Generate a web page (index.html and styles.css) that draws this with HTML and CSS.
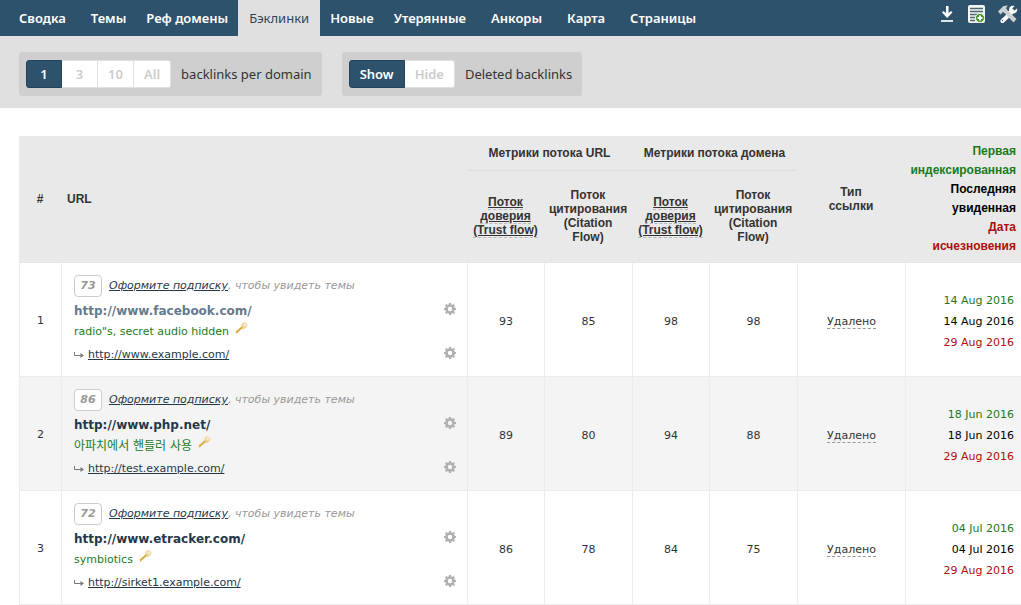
FILE: index.html
```html
<!DOCTYPE html>
<html lang="ru">
<head>
<meta charset="utf-8">
<title>Бэклинки</title>
<link rel="stylesheet" href="styles.css">
</head>
<body>
<svg class="sprite" aria-hidden="true">
  <symbol id="gear" viewBox="0 0 12 12">
    <path fill-rule="evenodd" d="M5 0h2l.3 1.500 1 .4L9.600 1 11 2.400l-.9 1.300.4 1L12 5v2l-1.500.3-.4 1 .9 1.300L9.600 11l-1.300-.9-1 .4L7 12H5l-.3-1.500-1-.4-1.300.9L1 9.600l.9-1.300-.4-1L0 7V5l1.500-.3.4-1L1 2.400 2.400 1l1.300.9 1-.4zM6 3.800a2.200 2.200 0 1 0 0 4.400 2.200 2.200 0 0 0 0-4.400z"/>
  </symbol>
  <symbol id="key" viewBox="0 0 13 12">
    <path d="M1 10.500 7.500 5" stroke="#d9a93a" stroke-width="2" fill="none"/>
    <path d="M1 11.500l2-1.500M2.500 8.500l1 1" stroke="#e6c264" stroke-width="1" fill="none"/>
    <circle cx="9.300" cy="3.300" r="3" fill="#efd9a0"/>
    <circle cx="9.800" cy="2.700" r="1.400" fill="#f8eccb"/>
    <path d="M6.700 4.500c.4 1.300 1.500 2 3 1.700" stroke="#e0b65a" fill="none"/>
  </symbol>
  <symbol id="arrow" viewBox="0 0 10 8">
    <path d="M.5 1v3.500H7" stroke="#777" fill="none"/>
    <path d="M6.500 2 10 4.500 6.500 7z" fill="#777"/>
  </symbol>
</svg>

<header class="topbar">
  <nav class="tabs">
    <a class="tab wide" href="#">Сводка</a>
    <a class="tab" href="#">Темы</a>
    <a class="tab" href="#">Реф домены</a>
    <a class="tab active" href="#" aria-current="page">Бэклинки</a>
    <a class="tab" href="#">Новые</a>
    <a class="tab wide" href="#">Утерянные</a>
    <a class="tab wide" href="#">Анкоры</a>
    <a class="tab wide" href="#">Карта</a>
    <a class="tab" href="#">Страницы</a>
  </nav>
  <div class="tools">
    <button class="tool" type="button" aria-label="Скачать">
      <svg width="12" height="18" viewBox="0 0 12 18"><path d="M5 1h2.500v7L10 6l1.500 1.500L6.200 13 1 7.500 2.500 6 5 8z" fill="#fff"/><path d="M0 15h12v2H0z" fill="#dfe6ea"/></svg>
    </button>
    <button class="tool" type="button" aria-label="Создать отчет">
      <svg width="18" height="18" viewBox="0 0 18 18"><rect width="17" height="18" rx="2" fill="#f4f6f3"/><path d="M2 3.500h13M2 6.500h13M2 9.500h8M2 12.500h5M2 15.500h5" stroke="#4b6572" stroke-width="1.500"/><circle cx="12" cy="13" r="4.500" fill="#3f9120" stroke="#edf3e7" /><path d="M12 10.500v5M9.500 13h5" stroke="#fff" stroke-width="2"/></svg>
    </button>
    <button class="tool" type="button" aria-label="Инструменты">
      <svg width="20" height="18" viewBox="0 0 20 18"><path d="M4.500 16 14 7" stroke="#fff" stroke-width="4" stroke-linecap="round"/><path d="M19 3.500 16.500 5.500l-2.300-2L16.500 1c-3-1-6 1.200-5.200 4.300L10 7l2.500 2.500 2-1.200c3.200.5 5.500-2 4.500-4.800z" fill="#fff"/><path d="M0 6.500 5.500 1 10 .5 8 3l1.200 2L18.500 14l-3 3.500L6.500 8 5 7 2.500 9.500z" fill="#ccd0d2"/><circle cx="4.500" cy="15.500" r=".7" fill="#2e526c"/></svg>
    </button>
  </div>
</header>

<section class="filters">
  <div class="filter" role="group" aria-labelledby="per-domain">
    <div class="switch">
      <button class="option selected" type="button" aria-pressed="true">1</button>
      <button class="option" type="button" aria-pressed="false">3</button>
      <button class="option" type="button" aria-pressed="false">10</button>
      <button class="option" type="button" aria-pressed="false">All</button>
    </div>
    <span id="per-domain">backlinks per domain</span>
  </div>
  <div class="filter" role="group" aria-labelledby="deleted">
    <div class="switch">
      <button class="option selected" type="button" aria-pressed="true">Show</button>
      <button class="option" type="button" aria-pressed="false">Hide</button>
    </div>
    <span id="deleted">Deleted backlinks</span>
  </div>
</section>

<main class="content">
  <table class="backlinks">
    <colgroup>
      <col class="col-num"><col class="col-url">
      <col class="col-trust"><col class="col-citation">
      <col class="col-trust"><col class="col-citation">
      <col class="col-type"><col class="col-dates">
    </colgroup>
    <thead>
      <tr>
        <th rowspan="2">#</th>
        <th rowspan="2" class="head-url">URL</th>
        <th colspan="2" class="metric-group">Метрики потока URL</th>
        <th colspan="2" class="metric-group">Метрики потока домена</th>
        <th rowspan="2">Тип<br>ссылки</th>
        <th rowspan="2" class="head-dates"><span class="first">Первая индексированная</span> <span class="last">Последняя увиденная</span> <span class="lost">Дата исчезновения</span></th>
      </tr>
      <tr class="metrics">
        <th><a class="hint" href="#">Поток доверия (Trust flow)</a></th>
        <th>Поток цитирования (Citation Flow)</th>
        <th><a class="hint" href="#">Поток доверия (Trust flow)</a></th>
        <th>Поток цитирования (Citation Flow)</th>
      </tr>
    </thead>
    <tbody>
      <tr>
        <td class="num">1</td>
        <td class="url-cell">
          <div class="topics"><b class="score">73</b><span><a href="#">Оформите подписку</a>, чтобы увидеть темы</span></div>
          <div class="source"><a class="visited" href="#">http://www.facebook.com/</a><button class="gear" type="button" aria-label="Настройки источника"><svg width="12" height="12"><use href="#gear"/></svg></button></div>
          <div class="anchor">radio"s, secret audio hidden<svg class="key" width="13" height="12"><use href="#key"/></svg></div>
          <div class="target"><svg width="10" height="8"><use href="#arrow"/></svg><a href="#">http://www.example.com/</a><button class="gear" type="button" aria-label="Настройки ссылки"><svg width="12" height="12"><use href="#gear"/></svg></button></div>
        </td>
        <td>93</td><td>85</td><td>98</td><td>98</td>
        <td><span class="status">Удалено</span></td>
        <td class="dates"><div class="first">14 Aug 2016</div><div class="last">14 Aug 2016</div><div class="lost">29 Aug 2016</div></td>
      </tr>
      <tr>
        <td class="num">2</td>
        <td class="url-cell">
          <div class="topics"><b class="score">86</b><span><a href="#">Оформите подписку</a>, чтобы увидеть темы</span></div>
          <div class="source"><a href="#">http://www.php.net/</a><button class="gear" type="button" aria-label="Настройки источника"><svg width="12" height="12"><use href="#gear"/></svg></button></div>
          <div class="anchor korean" lang="ko">아파치에서 핸들러 사용<svg class="key" width="13" height="12"><use href="#key"/></svg></div>
          <div class="target"><svg width="10" height="8"><use href="#arrow"/></svg><a href="#">http://test.example.com/</a><button class="gear" type="button" aria-label="Настройки ссылки"><svg width="12" height="12"><use href="#gear"/></svg></button></div>
        </td>
        <td>89</td><td>80</td><td>94</td><td>88</td>
        <td><span class="status">Удалено</span></td>
        <td class="dates"><div class="first">18 Jun 2016</div><div class="last">18 Jun 2016</div><div class="lost">29 Aug 2016</div></td>
      </tr>
      <tr>
        <td class="num">3</td>
        <td class="url-cell">
          <div class="topics"><b class="score">72</b><span><a href="#">Оформите подписку</a>, чтобы увидеть темы</span></div>
          <div class="source"><a href="#">http://www.etracker.com/</a><button class="gear" type="button" aria-label="Настройки источника"><svg width="12" height="12"><use href="#gear"/></svg></button></div>
          <div class="anchor">symbiotics<svg class="key" width="13" height="12"><use href="#key"/></svg></div>
          <div class="target"><svg width="10" height="8"><use href="#arrow"/></svg><a href="#">http://sirket1.example.com/</a><button class="gear" type="button" aria-label="Настройки ссылки"><svg width="12" height="12"><use href="#gear"/></svg></button></div>
        </td>
        <td>86</td><td>78</td><td>84</td><td>75</td>
        <td><span class="status">Удалено</span></td>
        <td class="dates"><div class="first">04 Jul 2016</div><div class="last">04 Jul 2016</div><div class="lost">29 Aug 2016</div></td>
      </tr>
    </tbody>
  </table>
</main>
</body>
</html>
```
FILE: styles.css
```css
* { box-sizing: border-box; }
body {
  margin: 0;
  background: #fff;
  color: #333;
  font: 11px/14px "DejaVu Sans", "Noto Sans CJK KR", sans-serif;
}
button {
  margin: 0;
  padding: 0;
  border: 0;
  background: none;
  font: inherit;
  cursor: pointer;
}
svg { display: block; flex: none; }
.sprite { display: none; }

.topbar {
  display: flex;
  justify-content: space-between;
  background: #2e526c;
  font: 600 13px/36px "Noto Sans", sans-serif;
}
.tabs { display: flex; padding-left: 9px; }
.tab {
  padding: 0 10px;
  color: #fff;
  text-decoration: none;
  white-space: nowrap;
}
.tab.wide { margin-right: 5px; }
.tab.active {
  padding: 0 11px;
  background: #e0e0e0;
  color: #2e4558;
  font-weight: 400;
}
.tools {
  display: flex;
  align-items: flex-start;
  gap: 12px;
  padding: 5px 3px 0 0;
}
.tool:first-child { margin-right: 3px; }

.filters {
  display: flex;
  gap: 20px;
  padding: 16px 19px 12px;
  background: #e0e0e0;
  font: 13px/18px "Noto Sans", sans-serif;
}
.filter {
  display: flex;
  align-items: center;
  gap: 10px;
  padding: 8px 10px 8px 7px;
  border-radius: 3px;
  background: #cfcfcf;
  white-space: nowrap;
}
.switch { display: flex; }
.option {
  min-width: 36px;
  height: 28px;
  padding: 0 10px;
  border: 1px solid #e0e0e0;
  border-left-width: 0;
  background: #fff;
  color: #ccc;
  font-weight: 600;
}
.option.selected {
  border: 1px solid #24445b;
  border-radius: 3px 0 0 3px;
  background: #2e526c;
  color: #fff;
}
.option:last-child { border-radius: 0 3px 3px 0; }

.content { padding: 28px 0 0 19px; }
.backlinks {
  width: 100%;
  table-layout: fixed;
  border-spacing: 0;
}
.col-num { width: 42px; }
.col-trust { width: 77px; }
.col-citation { width: 88px; }
.col-type { width: 108px; }
.col-dates { width: 116px; }

th {
  padding: 0 5px;
  border-bottom: 1px solid #e4e4e4;
  background: #e9e9e9;
  font: bold 12px/14px "Liberation Sans", sans-serif;
}
.head-url { padding-left: 6px; text-align: left; }
.metric-group {
  height: 35px;
  padding: 0;
  border-bottom: 1px dotted #d4d4d4;
}
.metrics th { height: 92px; padding-bottom: 2px; }
.hint {
  border-bottom: 1px dashed #b5bcc2;
  color: inherit;
  text-decoration: underline;
}
.head-dates {
  padding: 6px 5px 6px 0;
  line-height: 19px;
  text-align: right;
}
.head-dates span { display: block; }
.first { color: #1b7a1b; }
.last { color: #000; }
.lost { color: #b00c0c; }

td {
  padding: 5px 0 0;
  border: solid #ececec;
  border-width: 0 0 1px 1px;
  text-align: center;
}
.num { padding-top: 2px; }
tbody tr:nth-child(even) { background: #f4f4f4; }
.url-cell { padding: 12px 11px 5px 12px; text-align: left; }
.topics, .source, .anchor, .target { display: flex; align-items: center; }
.topics {
  height: 22px;
  gap: 7px;
  color: #999;
  font-style: italic;
}
.topics a, .target a { color: #24384a; }
.score {
  width: 28px;
  border: 1px solid #ccc;
  border-radius: 4px;
  background: #fff;
  line-height: 20px;
  text-align: center;
}
.source { height: 28px; font-size: 12px; font-weight: bold; }
.source a { color: #24384a; text-decoration: none; }
.source .visited { color: #667a8a; }
.anchor { height: 14px; gap: 6px; color: #1b7a1b; }
.korean { font-size: 12px; }
.key { margin-bottom: 8px; }
.target { height: 32px; gap: 4px; }
.gear { margin: 0 0 4px auto; }
.gear svg { fill: #b0b0b0; }
.status { border-bottom: 1px dashed #999; }
.dates { padding: 4px 7px 0 0; line-height: 21px; text-align: right; }
```
